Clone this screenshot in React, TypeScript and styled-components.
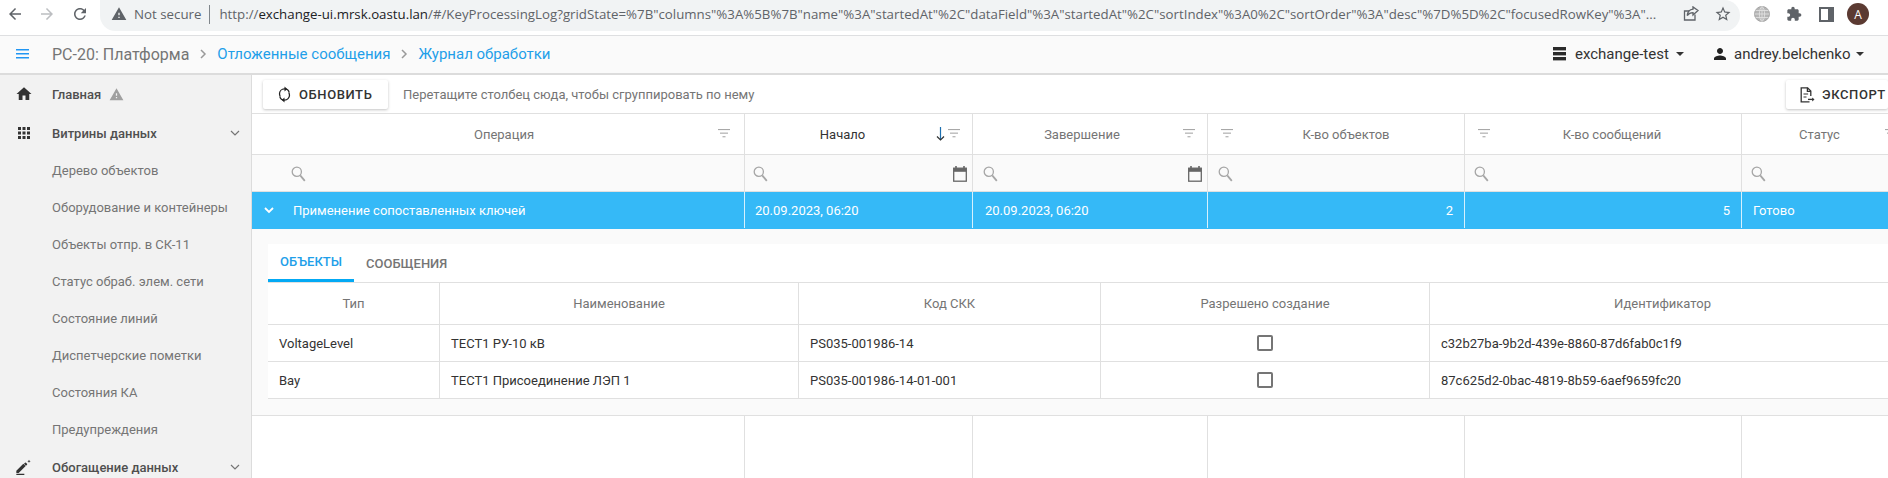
import React from "react";
import styled, { createGlobalStyle } from "styled-components";

const Global = createGlobalStyle`
  html, body { margin: 0; padding: 0; height: 478px; overflow: hidden; background: #fff; }
  #root { height: 478px; }
  * { box-sizing: border-box; }
  body { font-family: Roboto, "Liberation Sans", sans-serif; font-size: 13px; color: #333; }
`;

const Page = styled.div`display: flex; flex-direction: column; width: 1888px; height: 478px; overflow: hidden;`;

/* browser chrome */
const Chrome = styled.div`display: flex; align-items: flex-start; height: 36px; flex: none; background: #fff; border-bottom: 1px solid #dedfe1; padding-left: 6px;`;
const NavBtn = styled.div<{ $w: number }>`width: ${p => p.$w}px; height: 28px; display: flex; align-items: center; flex: none;`;
const AddressPill = styled.div`
  width: 1640px; height: 31px; flex: none; margin-left: 2px; background: #f1f3f4; border-radius: 0 16px 16px 16px;
  display: flex; align-items: center; padding: 0 0 3px 11px;
  font-family: "Open Sans", sans-serif; color: #5f6368; white-space: nowrap;
`;
const NotSecure = styled.span`margin-left: 7px; padding-right: 8px; border-right: 1px solid #80868b; line-height: 19px; font-size: 13.3px; flex: none;`;
const Url = styled.span`margin-left: 9px; width: 1464px; flex: none; font-size: 13.28px;`;
const Host = styled.span`color: #202124;`;
const PillAction = styled.div<{ $ml: number }>`margin-left: ${p => p.$ml}px; display: flex; align-items: center; flex: none;`;
const ChromeTool = styled.div<{ $ml: number }>`margin-left: ${p => p.$ml}px; height: 28px; display: flex; align-items: center; flex: none;`;
const Avatar = styled.div`width: 22px; height: 22px; border-radius: 50%; background: #5b3a32; color: #fff; font-size: 12px; display: flex; align-items: center; justify-content: center; font-family: "Open Sans", sans-serif;`;

/* app header */
const AppHeader = styled.header`display: flex; align-items: center; height: 39px; flex: none; background: #fafafa; border-bottom: 2px solid #dcdcdc; padding: 0 0 1px 16px; font-size: 15px; white-space: nowrap;`;
const MenuBtn = styled.div`width: 36px; display: flex; flex: none;`;
const Crumb = styled.span<{ $link?: boolean }>`color: ${p => (p.$link ? "#1f9fe9" : "#757575")}; font-size: ${p => (p.$link ? 15 : 16)}px;`;
const CrumbSep = styled.span`width: 28px; display: flex; justify-content: center; flex: none;`;
const HeaderSpacer = styled.div`flex: 1;`;
const HeaderMenu = styled.div<{ $w: number }>`display: flex; align-items: center; width: ${p => p.$w}px; flex: none; color: #333;`;
const HeaderLabel = styled.span<{ $w: number; $ml: number }>`width: ${p => p.$w}px; margin-left: ${p => p.$ml}px; flex: none;`;
const Caret = styled.span`width: 0; height: 0; border-left: 4px solid transparent; border-right: 4px solid transparent; border-top: 4px solid #333; flex: none;`;

const Body = styled.div`display: flex; flex: 1; min-height: 0;`;

/* sidebar */
const Sidebar = styled.nav`width: 252px; flex: none; background: #f2f2f2; border-right: 1px solid #dcdcdc; overflow: hidden;`;
const NavRow = styled.div<{ $section?: boolean; $mt?: number }>`
  display: flex; align-items: center; height: ${p => (p.$section ? 38 : 37)}px; margin-top: ${p => p.$mt ?? 0}px;
  padding: 0 11px 0 ${p => (p.$section ? 15 : 52)}px; white-space: nowrap;
  color: ${p => (p.$section ? "#4f4f4f" : "#757575")}; font-weight: ${p => (p.$section ? 500 : 400)};
`;
const NavIcon = styled.span`width: 37px; display: flex; flex: none;`;
const NavChevron = styled.span`margin-left: auto; display: flex;`;
const NavWarn = styled.span`margin-left: 8px; display: flex;`;

/* main */
const Main = styled.main`flex: 1; min-width: 0; display: flex; flex-direction: column; overflow: hidden; background: #fff;`;
const Toolbar = styled.div`height: 38px; flex: none; display: flex; align-items: flex-start; padding: 5px 0 0 11px;`;
const ToolButton = styled.button<{ $w: number; $pl: number; $gap: number }>`
  width: ${p => p.$w}px; height: 29px; flex: none; border: 0; background: #fff; border-radius: 2px; padding: 0 0 0 ${p => p.$pl}px;
  box-shadow: 0 1px 3px rgba(0,0,0,.24); display: flex; align-items: center; gap: ${p => p.$gap}px;
  font: 500 13px Roboto, sans-serif; letter-spacing: .6px; color: #333; white-space: nowrap;
`;
const GroupHint = styled.span`margin-left: 15px; height: 29px; display: flex; align-items: center; color: #757575; white-space: nowrap;`;
const ExportSlot = styled.div`margin-left: auto; flex: none;`;

const GridRow = styled.div<{ $h: number; $selected?: boolean; $filter?: boolean; $fill?: boolean }>`
  display: grid; grid-template-columns: 493px 228px 235px 257px 277px 160px; width: 1650px; flex: ${p => (p.$fill ? 1 : "none")};
  height: ${p => p.$h}px; border-top: 1px solid #e0e0e0;
  background: ${p => (p.$selected ? "#35b9f7" : p.$filter ? "#fafafa" : "#fff")};
`;
const HeadCell = styled.div<{ $pl?: number; $pr?: number; $dark?: boolean }>`
  position: relative; display: flex; align-items: center; justify-content: center; padding: 0 ${p => p.$pr ?? 0}px 0 ${p => p.$pl ?? 0}px;
  border-right: 1px solid #e0e0e0; color: ${p => (p.$dark ? "#333" : "#757575")}; white-space: nowrap;
`;
const FilterMark = styled.span<{ $side: "left" | "right"; $off: number }>`position: absolute; top: 15px; ${p => p.$side}: ${p => p.$off}px; display: flex;`;
const SortMark = styled.span`position: absolute; top: 13px; right: 27px; display: flex;`;
const FilterCell = styled.div<{ $pl: number }>`display: flex; align-items: center; justify-content: space-between; padding: 2px 5px 0 ${p => p.$pl}px; border-right: 1px solid #e0e0e0;`;
const RowCell = styled.div<{ $right?: boolean; $pl?: number }>`
  display: flex; align-items: center; justify-content: ${p => (p.$right ? "flex-end" : "flex-start")};
  padding: 0 11px 0 ${p => p.$pl ?? 10}px; height: 36px; border-right: 1px solid #d7f1fd; color: #fff; font-weight: 400; white-space: nowrap;
`;
const Expand = styled.span`width: 29px; display: flex; flex: none;`;
const EmptyCell = styled.div`border-right: 1px solid #e0e0e0;`;

/* detail */
const DetailBand = styled.div`height: 186px; flex: none; background: #fafafa; padding: 15px 0 16px 16px;`;
const DetailPanel = styled.div`background: #fff; height: 155px; width: 1628px;`;
const Tabs = styled.div`display: flex; height: 39px; border-bottom: 1px solid #e0e0e0;`;
const Tab = styled.div<{ $active?: boolean }>`
  height: 38px; padding: 0 12px 0; display: flex; align-items: center; font-weight: 500; font-size: 13px;
  color: ${p => (p.$active ? "#1f9fe9" : "#757575")}; border-bottom: ${p => (p.$active ? "3px solid #03a9f4" : "0")};
`;
const DetailRow = styled.div<{ $head?: boolean }>`
  display: grid; grid-template-columns: 172px 359px 302px 329px 1fr; height: ${p => (p.$head ? 42 : 37)}px; border-bottom: 1px solid #e0e0e0;
`;
const DetailHead = styled.div`display: flex; align-items: center; justify-content: center; border-right: 1px solid #e0e0e0; color: #757575;`;
const DetailCell = styled.div<{ $center?: boolean }>`display: flex; align-items: center; justify-content: ${p => (p.$center ? "center" : "flex-start")}; padding-left: ${p => (p.$center ? 0 : 11)}px; border-right: 1px solid #e0e0e0; color: #333; white-space: nowrap;`;
const Check = styled.span`width: 16px; height: 16px; border: 2px solid #757575; border-radius: 2px; background: #fff;`;

const Mi = ({ d, s = 24, c = "#333", vb = 24 }: { d: string; s?: number; c?: string; vb?: number }) => (
  <svg width={s} height={s} viewBox={`0 0 ${vb} ${vb}`} fill={c}><path d={d} /></svg>
);
const P = {
  back: "M20 11H7.83l5.59-5.59L12 4l-8 8 8 8 1.41-1.41L7.83 13H20v-2z",
  fwd: "M12 4l-1.41 1.41L16.17 11H4v2h12.17l-5.58 5.59L12 20l8-8z",
  reload: "M17.65 6.35C16.2 4.9 14.21 4 12 4c-4.42 0-7.99 3.58-7.99 8s3.57 8 7.99 8c3.73 0 6.84-2.55 7.73-6h-2.08c-.82 2.33-3.04 4-5.65 4-3.31 0-6-2.69-6-6s2.69-6 6-6c1.66 0 3.14.69 4.22 1.78L13 11h7V4l-2.35 2.35z",
  warn: "M1 21h22L12 2 1 21zm12-3h-2v-2h2v2zm0-4h-2v-4h2v4z",
  star: "M22 9.24l-7.19-.62L12 2 9.19 8.63 2 9.24l5.46 4.73L5.82 21 12 17.27 18.18 21l-1.63-7.03L22 9.24zM12 15.4l-3.76 2.27 1-4.28-3.32-2.88 4.38-.38L12 6.1l1.71 4.04 4.38.38-3.32 2.88 1 4.28L12 15.4z",
  puzzle: "M20.5 11H19V7c0-1.1-.9-2-2-2h-4V3.5C13 2.12 11.88 1 10.5 1S8 2.12 8 3.5V5H4c-1.1 0-1.99.9-1.99 2v3.8H3.5c1.49 0 2.7 1.21 2.7 2.7s-1.21 2.7-2.7 2.7H2V20c0 1.1.9 2 2 2h3.8v-1.5c0-1.49 1.21-2.7 2.7-2.7 1.49 0 2.7 1.21 2.7 2.7V22H17c1.1 0 2-.9 2-2v-4h1.5c1.38 0 2.5-1.12 2.5-2.5S21.88 11 20.5 11z",
  home: "M10 20v-6h4v6h5v-8h3L12 3 2 12h3v8z",
  apps: "M4 8h4V4H4v4zm6 12h4v-4h-4v4zm-6 0h4v-4H4v4zm0-6h4v-4H4v4zm6 0h4v-4h-4v4zm6-10v4h4V4h-4zm-6 4h4V4h-4v4zm6 6h4v-4h-4v4zm0 6h4v-4h-4v4z",
  person: "M12 12c2.21 0 4-1.79 4-4s-1.79-4-4-4-4 1.79-4 4 1.79 4 4 4zm0 2c-2.67 0-8 1.34-8 4v2h16v-2c0-2.66-5.33-4-8-4z",
  edit: "M2 17.5V21h3.5L16 10.5 12.5 7 2 17.5zM2 22.3h12V24H2zM18 8.5a1 1 0 0 0 0-1.4l-1.6-1.6a1 1 0 0 0-1.4 0L13.5 7l3 3 1.5-1.5zM21 1l.7 1.8 1.8.7-1.8.7L21 6l-.7-1.8-1.8-.7 1.8-.7z",
};

const Share = () => (
  <svg width="16" height="16" viewBox="0 0 16 16" fill="none" stroke="#5f6368" strokeWidth="1.3"><path d="M12 8.5V14H1.5V5H6" /><path d="M15 4.5L10 .9v2.3C6.5 3.6 4.6 6 4.2 9.6c1.4-2 3.1-2.9 5.8-2.9v2.3z" /></svg>
);
const Globe = () => (
  <svg width="16" height="16" viewBox="0 0 16 16" fill="none" stroke="#a6a6a6"><circle cx="8" cy="8" r="7.5" fill="#b5b5b5" /><path d="M.5 8h15M1.5 4.5h13M1.5 11.5h13M8 .5v15M8 .5C4.5 3 4.5 13 8 15.5M8 .5c3.5 2.5 3.5 12.5 0 15" stroke="#e4e4e4" strokeWidth=".8" /></svg>
);
const SidePanel = () => (
  <svg width="15" height="15" viewBox="0 0 15 15"><rect x="1" y="1" width="13" height="13" fill="none" stroke="#5f6368" strokeWidth="2" /><rect x="9" y="1" width="5" height="13" fill="#5f6368" /></svg>
);
const Burger = () => (
  <svg width="14" height="10" viewBox="0 0 14 10" fill="#2196f3"><rect width="13" height="1.5" /><rect y="4" width="13" height="1.5" /><rect y="8" width="13" height="1.5" /></svg>
);
const CrumbChevron = () => (
  <svg width="7" height="10" viewBox="0 0 7 10" fill="none" stroke="#9a9a9a" strokeWidth="1.5"><path d="M1 1l4 4-4 4" /></svg>
);
const Db = () => (
  <svg width="13" height="14" viewBox="0 0 13 14" fill="#2b2b2b"><rect width="13" height="3.4" /><rect y="5" width="13" height="3.4" /><rect y="10" width="13" height="3.4" /></svg>
);
const Chevron = ({ c = "#757575", w = 1.2 }: { c?: string; w?: number }) => (
  <svg width="10" height="7" viewBox="0 0 10 7" fill="none" stroke={c} strokeWidth={w}><path d="M1 1l4 4 4-4" /></svg>
);
const FilterGlyph = () => (
  <svg width="12" height="9" viewBox="0 0 12 9" fill="#a8a8a8"><rect width="12" height="1.1" /><rect x="2" y="3.6" width="8" height="1.1" /><rect x="4.5" y="7.2" width="3" height="1.1" /></svg>
);
const Search = () => (
  <svg width="15" height="16" viewBox="0 0 15 16" fill="none" stroke="#a6a6a6" strokeWidth="1.3"><circle cx="5.8" cy="5.8" r="4.6" /><path d="M9.2 9.4l4.6 5.4" strokeWidth="1.8" /></svg>
);
const Calendar = () => (
  <svg width="14" height="16" viewBox="0 0 14 16" fill="none"><rect x=".7" y="2.2" width="12.6" height="13" stroke="#666" strokeWidth="1.3" /><rect x=".7" y="2.2" width="12.6" height="3.6" fill="#666" /><rect x="2.2" y="0" width="1.6" height="3" fill="#666" /><rect x="10.2" y="0" width="1.6" height="3" fill="#666" /></svg>
);
const SortDown = () => (
  <svg width="9" height="14" viewBox="0 0 9 14" fill="none" stroke="#1d6fb0" strokeWidth="1.2"><path d="M4.5 0v12.5" /><path d="M1 9.5l3.5 3.5L8 9.5" stroke="#333" /></svg>
);
const Sync = () => (
  <svg width="13" height="17" viewBox="0 0 12 16" fill="none" stroke="#222" strokeWidth="1.2"><path d="M10.4 6C9.9 4 8.2 2.8 6 2.8 3.3 2.8 1.3 4.9 1.3 7.4c0 1 .3 1.8.7 2.5" /><path d="M1.6 10C2.1 12 3.8 13.2 6 13.2c2.7 0 4.7-2.1 4.7-4.6 0-1-.3-1.8-.7-2.5" /><path d="M6 .4v4.8L8.6 2.8zM6 15.6v-4.8L3.4 13.2z" fill="#222" stroke="none" /></svg>
);
const ExportIcon = () => (
  <svg width="15" height="16" viewBox="0 0 15 16" fill="none" stroke="#333" strokeWidth="1.3"><path d="M9.5 14.8H1.2V.8h6.4l3.2 3.3V9" /><path d="M7.4.8v3.5h3.4" /><path d="M3.5 7h4.6M3.5 10h3" strokeWidth="1.1" /><path d="M8 12.4h5.4" /><path d="M12.2 10.4l2.3 2-2.3 2z" fill="#333" stroke="none" /></svg>
);

const sub = ["Дерево объектов", "Оборудование и контейнеры", "Объекты отпр. в СК-11", "Статус обраб. элем. сети", "Состояние линий", "Диспетчерские пометки", "Состояния КА", "Предупреждения"];

const detail = [
  { type: "VoltageLevel", name: "ТЕСТ1 РУ-10 кВ", code: "PS035-001986-14", id: "c32b27ba-9b2d-439e-8860-87d6fab0c1f9" },
  { type: "Bay", name: "ТЕСТ1 Присоединение ЛЭП 1", code: "PS035-001986-14-01-001", id: "87c625d2-0bac-4819-8b59-6aef9659fc20" },
];

export default function App() {
  return (
    <Page>
      <Global />
      <Chrome>
        <NavBtn $w={32}><Mi d={P.back} s={18} c="#5f6368" /></NavBtn>
        <NavBtn $w={33}><Mi d={P.fwd} s={18} c="#bcbec1" /></NavBtn>
        <NavBtn $w={27}><Mi d={P.reload} s={18} c="#5f6368" /></NavBtn>
        <AddressPill>
          <Mi d={P.warn} s={16} c="#5f6368" />
          <NotSecure>Not secure</NotSecure>
          <Url>http://<Host>exchange-ui.mrsk.oastu.lan</Host>/#/KeyProcessingLog?gridState=%7B"columns"%3A%5B%7B"name"%3A"startedAt"%2C"dataField"%3A"startedAt"%2C"sortIndex"%3A0%2C"sortOrder"%3A"desc"%7D%5D%2C"focusedRowKey"%3A"...</Url>
          <PillAction $ml={0}><Share /></PillAction>
          <PillAction $ml={15}><Mi d={P.star} s={18} c="#5f6368" /></PillAction>
        </AddressPill>
        <ChromeTool $ml={14}><Globe /></ChromeTool>
        <ChromeTool $ml={16}><Mi d={P.puzzle} s={16} c="#5f6368" /></ChromeTool>
        <ChromeTool $ml={17}><SidePanel /></ChromeTool>
        <ChromeTool $ml={13}><Avatar>A</Avatar></ChromeTool>
      </Chrome>

      <AppHeader>
        <MenuBtn><Burger /></MenuBtn>
        <Crumb>РС-20: Платформа</Crumb>
        <CrumbSep><CrumbChevron /></CrumbSep>
        <Crumb $link>Отложенные сообщения</Crumb>
        <CrumbSep><CrumbChevron /></CrumbSep>
        <Crumb $link>Журнал обработки</Crumb>
        <HeaderSpacer />
        <HeaderMenu $w={158}>
          <Db />
          <HeaderLabel $w={101} $ml={9}>exchange-test</HeaderLabel>
          <Caret />
        </HeaderMenu>
        <HeaderMenu $w={177}>
          <Mi d={P.person} s={18} c="#222" />
          <HeaderLabel $w={122} $ml={5}>andrey.belchenko</HeaderLabel>
          <Caret />
        </HeaderMenu>
      </AppHeader>

      <Body>
        <Sidebar>
          <NavRow $section>
            <NavIcon><Mi d={P.home} s={18} c="#333" /></NavIcon>
            Главная
            <NavWarn><Mi d={P.warn} s={15} c="#a0a0a0" /></NavWarn>
          </NavRow>
          <NavRow $section $mt={1}>
            <NavIcon><Mi d={P.apps} s={18} c="#333" /></NavIcon>
            Витрины данных
            <NavChevron><Chevron /></NavChevron>
          </NavRow>
          {sub.map(s => <NavRow key={s}>{s}</NavRow>)}
          <NavRow $section>
            <NavIcon><Mi d={P.edit} s={16} c="#333" /></NavIcon>
            Обогащение данных
            <NavChevron><Chevron /></NavChevron>
          </NavRow>
        </Sidebar>

        <Main>
          <Toolbar>
            <ToolButton $w={125} $pl={15} $gap={8}><Sync />ОБНОВИТЬ</ToolButton>
            <GroupHint>Перетащите столбец сюда, чтобы сгруппировать по нему</GroupHint>
            <ExportSlot><ToolButton $w={102} $pl={14} $gap={7}><ExportIcon />ЭКСПОРТ</ToolButton></ExportSlot>
          </Toolbar>

          <GridRow $h={41}>
            <HeadCell $pl={12}>Операция<FilterMark $side="right" $off={14}><FilterGlyph /></FilterMark></HeadCell>
            <HeadCell $dark $pr={32}>Начало<SortMark><SortDown /></SortMark><FilterMark $side="right" $off={12}><FilterGlyph /></FilterMark></HeadCell>
            <HeadCell $pr={16}>Завершение<FilterMark $side="right" $off={12}><FilterGlyph /></FilterMark></HeadCell>
            <HeadCell $pl={20}><FilterMark $side="left" $off={13}><FilterGlyph /></FilterMark>К-во объектов</HeadCell>
            <HeadCell $pl={18}><FilterMark $side="left" $off={13}><FilterGlyph /></FilterMark>К-во сообщений</HeadCell>
            <HeadCell $pr={4}>Статус<FilterMark $side="right" $off={4}><FilterGlyph /></FilterMark></HeadCell>
          </GridRow>
          <GridRow $h={37} $filter>
            <FilterCell $pl={39}><Search /></FilterCell>
            <FilterCell $pl={8}><Search /><Calendar /></FilterCell>
            <FilterCell $pl={10}><Search /><Calendar /></FilterCell>
            <FilterCell $pl={10}><Search /></FilterCell>
            <FilterCell $pl={9}><Search /></FilterCell>
            <FilterCell $pl={9}><Search /></FilterCell>
          </GridRow>
          <GridRow $h={38} $selected>
            <RowCell $pl={12}><Expand><Chevron c="#fff" w={1.8} /></Expand>Применение сопоставленных ключей</RowCell>
            <RowCell>20.09.2023, 06:20</RowCell>
            <RowCell $pl={12}>20.09.2023, 06:20</RowCell>
            <RowCell $right>2</RowCell>
            <RowCell $right>5</RowCell>
            <RowCell $pl={11}>Готово</RowCell>
          </GridRow>

          <DetailBand>
            <DetailPanel>
              <Tabs>
                <Tab $active>ОБЪЕКТЫ</Tab>
                <Tab>СООБЩЕНИЯ</Tab>
              </Tabs>
              <DetailRow $head>
                <DetailHead>Тип</DetailHead>
                <DetailHead>Наименование</DetailHead>
                <DetailHead>Код СКК</DetailHead>
                <DetailHead>Разрешено создание</DetailHead>
                <DetailHead>Идентификатор</DetailHead>
              </DetailRow>
              {detail.map(r => (
                <DetailRow key={r.id}>
                  <DetailCell>{r.type}</DetailCell>
                  <DetailCell>{r.name}</DetailCell>
                  <DetailCell>{r.code}</DetailCell>
                  <DetailCell $center><Check /></DetailCell>
                  <DetailCell>{r.id}</DetailCell>
                </DetailRow>
              ))}
            </DetailPanel>
          </DetailBand>

          <GridRow $h={63} $fill>
            <EmptyCell /><EmptyCell /><EmptyCell /><EmptyCell /><EmptyCell /><EmptyCell />
          </GridRow>
        </Main>
      </Body>
    </Page>
  );
}
